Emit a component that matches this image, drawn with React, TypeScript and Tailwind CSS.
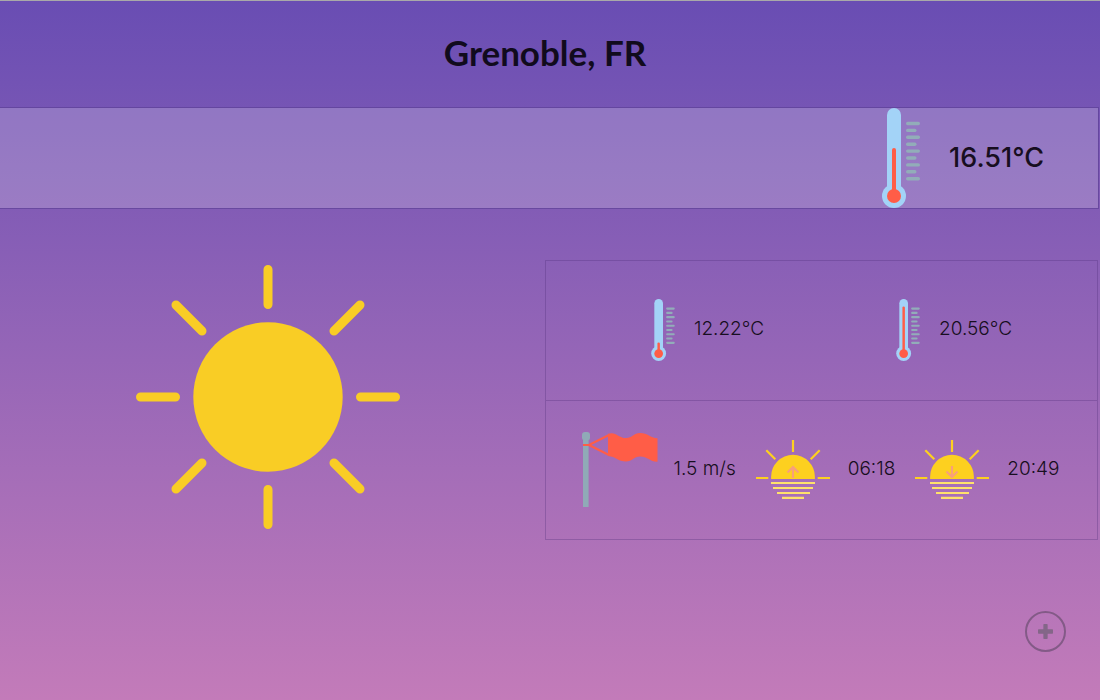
import React from "react";

const TICKS = [0, 1, 2, 3, 4, 5, 6, 7, 8];

function Thermometer({ top, className }: { top: number; className: string }) {
  return (
    <svg viewBox="0 0 38 100" className={className} aria-hidden="true">
      <rect x="5" y="0" width="14" height="90" rx="7" fill="#a3d3f7" />
      <circle cx="12" cy="88" r="12" fill="#a3d3f7" />
      <path d={`M12 88V${top + 2}`} stroke="#ff5d47" strokeWidth="4" strokeLinecap="round" />
      <circle cx="12" cy="88" r="7" fill="#ff5d47" />
      {TICKS.map((i) => (
        <rect key={i} x="24" y={13.8 + i * 6.9} width={i % 2 === 0 ? 14 : 10.5} height="3.4" rx="1.7" fill="#92adb9" />
      ))}
    </svg>
  );
}

function Sun() {
  return (
    <svg viewBox="0 0 264 264" className="w-[264px]" role="img" aria-label="Clear sky">
      <circle cx="132" cy="132" r="74.7" fill="#f9cd25" />
      <g stroke="#f9cd25" strokeWidth="9" strokeLinecap="round">
        <path d="M132 4.5V39.5M132 224.500V259.500M4.500 132H39.500M224.500 132H259.500" />
        <path d="M40 40L66 66M224 40L198 66M40 224L66 198M224 224L198 198" />
      </g>
    </svg>
  );
}

function Flag() {
  return (
    <svg viewBox="0 0 76 75" className="w-[76px]" aria-hidden="true">
      <rect x="1" y="3" width="5.600" height="72" fill="#90aab7" />
      <rect x="0" y="0" width="8" height="8.500" rx="3" fill="#90aab7" />
      <path d="M1 13H7L27 3M7 13L27 23" fill="none" stroke="#ff5d47" strokeWidth="2.200" />
      <path d="M26 1.800C34 -1 36 6 44 6C50 6 52 1 58 1C66 1 68 6 75.500 6.200V29.700C68 30 66 24.500 58 24.500C52 24.500 50 29.500 44 29.500C36 29.500 34 24.500 26 24Z" fill="#ff5d47" />
    </svg>
  );
}

function Horizon({ direction }: { direction: "up" | "down" }) {
  return (
    <svg viewBox="0 0 74 60" className="w-[74px]" aria-hidden="true">
      <path d="M15.100 40V37.700A21.900 21.900 0 0 1 58.900 37.700V40Z" fill="#fdd01f" />
      <path
        d="M37 1V13M0 39H12.300M61.700 39H74M10.300 11.300L19.300 20.300M63.700 11.300L54.700 20.300"
        stroke="#fdd01f"
        strokeWidth="2.200"
      />
      <path d="M15 44H59M17 49H57M21 54H54M26 58.900H48" stroke="#ffe16b" strokeWidth="2.200" />
      <path
        d={direction === "up" ? "M37 39V28M31.500 33.500L37 28L42.500 33.500" : "M37 27V38M31.500 32.500L37 38L42.500 32.500"}
        fill="none"
        stroke="#f8a07a"
        strokeWidth="2.200"
      />
    </svg>
  );
}

export default function App() {
  return (
    <div className="min-h-screen border-t border-[#a9a9a9] bg-linear-to-b from-[#694db3] to-[#c37bb9] font-['Inter',sans-serif] text-[#170e20]">
      <header className="flex h-[106px] items-center justify-center pr-2.5 pb-1">
        <h1 className="font-['Lato',sans-serif] text-[35px] leading-none font-bold text-[#110b1d]">Grenoble, FR</h1>
      </header>

      <main className="pr-px">
        <section className="flex h-[102px] items-center justify-end gap-[29px] border-y border-r border-[#593c91]/60 bg-white/20 bg-clip-padding pr-[54px]">
          <Thermometer top={40} className="h-[100px] w-[38px]" />
          <p className="text-[27px] font-medium">16.51°C</p>
        </section>

        <div className="grid grid-cols-[545fr_553fr] pt-[51px] pr-px">
          <div className="flex items-start justify-center pt-[5px] pr-2.5">
            <Sun />
          </div>
          <section className="border border-[#4b2a78]/30 text-[19px] font-light">
            <div className="flex h-[140px] items-center justify-center gap-[132px] border-b border-[#4b2a78]/30 pb-0.5 pl-5">
              <div className="flex items-center gap-[19px]">
                <Thermometer top={70} className="h-[62px] w-6" />
                <span>12.22°C</span>
              </div>
              <div className="flex items-center gap-[19px]">
                <Thermometer top={12} className="h-[62px] w-6" />
                <span>20.56°C</span>
              </div>
            </div>
            <div className="flex h-[138px] items-center justify-center gap-5 pr-0.5 pb-0.5">
              <div className="flex items-center gap-4">
                <Flag />
                <span>1.5 m/s</span>
              </div>
              <div className="flex items-center gap-[18px]">
                <Horizon direction="up" />
                <time>06:18</time>
              </div>
              <div className="flex items-center gap-[18px]">
                <Horizon direction="down" />
                <time>20:49</time>
              </div>
            </div>
          </section>
        </div>
      </main>

      <footer className="flex justify-end pt-[71px] pr-[34px]">
        <button
          type="button"
          aria-label="Add city"
          className="flex size-[41px] items-center justify-center rounded-full border-2 border-[#835a87] text-[#846688]"
        >
          <svg viewBox="0 0 14 14" className="size-[15px]" aria-hidden="true">
            <path d="M5 .6Q5 0 5.600 0H8.400Q9 0 9 .6V5H13.400Q14 5 14 5.600V8.400Q14 9 13.400 9H9V13.400Q9 14 8.400 14H5.600Q5 14 5 13.400V9H.6Q0 9 0 8.400V5.600Q0 5 .6 5H5Z" fill="currentColor" />
          </svg>
        </button>
      </footer>
    </div>
  );
}
